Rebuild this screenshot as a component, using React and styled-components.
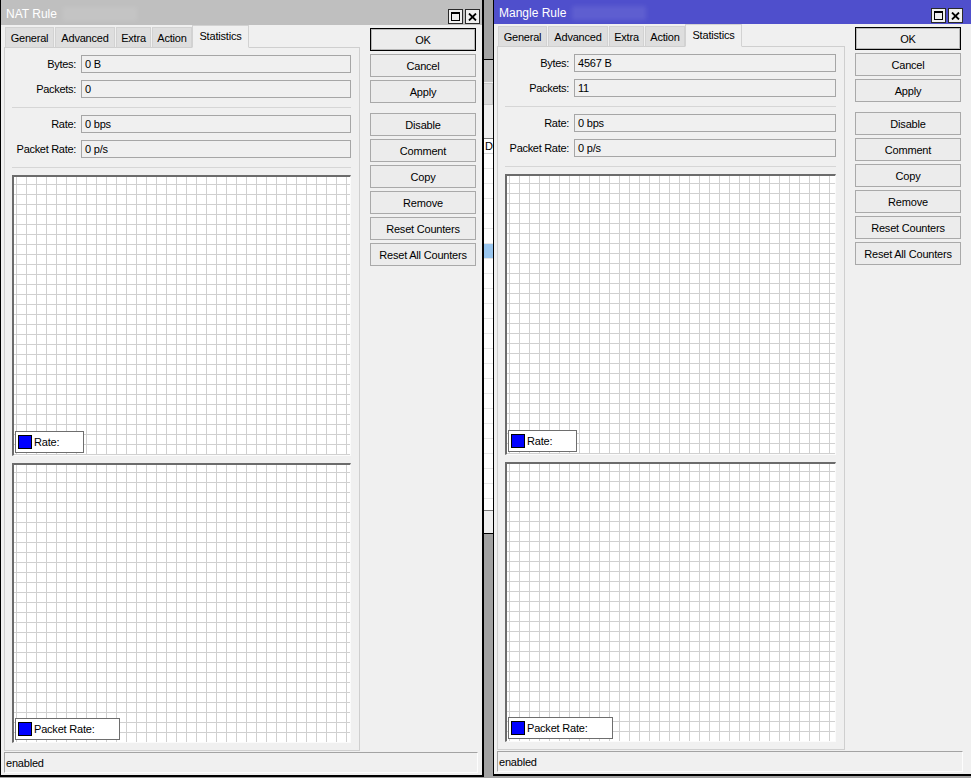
import React from 'react';
import styled, { createGlobalStyle } from 'styled-components';

const GlobalStyle = createGlobalStyle`
  html, body { margin: 0; padding: 0; }
  body {
    width: 971px; height: 778px; overflow: hidden;
    font-family: "Liberation Sans", Arial, sans-serif;
    font-size: 11px; letter-spacing: -0.2px; color: #000;
  }
`;

const Desktop = styled.div`
  position: relative;
  width: 971px;
  height: 778px;
  overflow: hidden;
  background: #a2a2a2;
`;

/* ---------- window behind (only a thin strip shows) ---------- */
const BgWindow = styled.div`
  position: absolute;
  left: 300px;
  top: 59px;
  width: 193px;
  height: 475px;
  box-sizing: border-box;
  border: 1px solid #000;
  border-right: 0;
  background: #f0f0f0;
  display: flex;
  flex-direction: column;
  overflow: hidden;
`;
const BgTitle = styled.div`
  flex: none;
  height: 22px;
  background: #c2c2c2;
`;
const BgToolbar = styled.div`
  flex: none;
  height: 56px;
  box-sizing: border-box;
  padding: 1px 0 1px 3px;
  display: flex;
  flex-direction: column;
  gap: 6px;
`;
const BgToolButton = styled.div`
  height: 22px;
  box-sizing: border-box;
  background: #dadada;
  border: 1px solid #c6c6c6;
`;
const BgList = styled.div`
  flex: 1;
  min-height: 0;
  margin-left: 3px;
  background: #fff;
  border: 1px solid #7a7a7a;
  border-right: 0;
  display: flex;
  flex-direction: column;
  overflow: hidden;
`;
const BgRow = styled.div`
  flex: none;
  height: 15px;
  box-sizing: border-box;
  display: grid;
  grid-template-columns: 178px 1fr;
  border-bottom: 1px solid ${p => (p.$header ? '#d5d5d5' : '#e6e6e6')};
  background: ${p => (p.$selected ? '#99c6ef' : '#fff')};
  line-height: 14px;
  white-space: nowrap;
`;
const BgCell = styled.div`
  padding-left: 2px;
  overflow: hidden;
  min-width: 0;
`;
const BgStatus = styled.div`
  flex: none;
  height: 22px;
`;

/* ---------- dialog windows ---------- */
const Win = styled.div`
  position: absolute;
  left: ${p => p.$left}px;
  top: ${p => p.$top}px;
  width: ${p => p.$width}px;
  height: 778px;
  box-sizing: border-box;
  border-style: solid;
  border-color: #000;
  border-width: 1px 2px 2px 1px;
  background: #f0f0f0;
  display: flex;
  flex-direction: column;
`;

const TitleBar = styled.div`
  flex: none;
  height: 25px;
  box-sizing: border-box;
  display: flex;
  align-items: flex-end;
  padding: 0 ${p => p.$padRight}px 1px 5px;
  background: ${p => (p.$active ? '#4f4fcc' : '#bfbfbf')};
`;
const TitleText = styled.div`
  align-self: center;
  margin-top: 4px;
  color: #fff;
  font-size: 12px;
  letter-spacing: 0;
  white-space: nowrap;
`;
const TitleBlur = styled.div`
  align-self: center;
  margin: 3px 0 0 6px;
  width: 74px;
  height: 14px;
  background: rgba(255, 255, 255, 0.09);
  filter: blur(2px);
`;
const TitleSpacer = styled.div`
  flex: 1;
`;
const TitleButtons = styled.div`
  display: flex;
  gap: 2px;
`;
const TitleButton = styled.div`
  width: 15px;
  height: 15px;
  box-sizing: border-box;
  border: 1px solid #2a2a2a;
  background: #f0f0f0;
  display: flex;
  align-items: center;
  justify-content: center;
`;

const Body = styled.div`
  flex: 1;
  min-height: 0;
  display: flex;
  flex-direction: column;
  padding: 0 ${p => p.$padRight}px 2px 3px;
`;
const Main = styled.div`
  flex: 1;
  min-height: 0;
  display: flex;
  gap: 10px;
`;
const TabArea = styled.div`
  flex: 1;
  min-width: 0;
  display: flex;
  flex-direction: column;
`;
const TabStrip = styled.div`
  flex: none;
  height: 23px;
  display: flex;
  align-items: flex-end;
  padding-left: 1px;
  margin-bottom: -1px;
  position: relative;
  z-index: 1;
`;
const Tab = styled.div`
  width: ${p => p.$w}px;
  height: ${p => (p.$active ? 23 : 21)}px;
  box-sizing: border-box;
  display: flex;
  align-items: center;
  justify-content: center;
  padding-bottom: ${p => (p.$active ? 2 : 0)}px;
  margin: 0 1px 0 ${p => (p.$active ? -1 : 0)}px;
  background: ${p => (p.$active ? '#f0f0f0' : '#dedede')};
  border: 1px solid #d2d2d2;
  border-bottom-color: ${p => (p.$active ? '#f0f0f0' : '#cfcfcf')};
  white-space: nowrap;
`;
const Panel = styled.div`
  flex: 1;
  min-height: 0;
  box-sizing: border-box;
  border: 1px solid #cfcfcf;
  background: #f0f0f0;
  padding: 7px 8px 7px 7px;
  display: flex;
  flex-direction: column;
`;
const Fields = styled.div`
  flex: none;
  display: grid;
  grid-template-columns: 64px 1fr;
  column-gap: 5px;
  row-gap: 7px;
`;
const Label = styled.div`
  text-align: right;
  line-height: 18px;
  white-space: nowrap;
  letter-spacing: -0.3px;
`;
const ValueBox = styled.div`
  height: 18px;
  box-sizing: border-box;
  border: 1px solid #a6a6a6;
  background: #f0f0f0;
  padding: 0 3px;
  line-height: 16px;
  white-space: nowrap;
`;
const Separator = styled.div`
  flex: none;
  height: 1px;
  background: #d6d6d6;
  margin: 9px 0 7px;
`;
const Graphs = styled.div`
  flex: 1;
  min-height: 0;
  display: flex;
  flex-direction: column;
  gap: 7px;
`;
const Graph = styled.div`
  flex: 1;
  min-height: 0;
  position: relative;
  border-style: solid;
  border-width: 2px 1px 1px 2px;
  border-color: #6b6b6b #fbfbfb #fbfbfb #6b6b6b;
  background-color: #fff;
  background-image:
    linear-gradient(to right, #d0d0d0 1px, transparent 1px),
    linear-gradient(to bottom, #d0d0d0 1px, transparent 1px);
  background-size: 10px 10px;
  background-position: 2px 7px;
`;
const Legend = styled.div`
  position: absolute;
  left: 1px;
  bottom: 2px;
  height: 22px;
  box-sizing: border-box;
  display: flex;
  align-items: center;
  gap: 2px;
  padding: 0 24px 0 2px;
  background: #fff;
  border: 1px solid #6e6e6e;
  white-space: nowrap;
`;
const Swatch = styled.span`
  width: 14px;
  height: 14px;
  box-sizing: border-box;
  background: #0000ff;
  border: 1px solid #000;
`;

const ButtonColumn = styled.div`
  flex: none;
  width: 106px;
  display: flex;
  flex-direction: column;
  gap: 3px;
  padding-top: 3px;
`;
const Button = styled.button`
  height: 23px;
  box-sizing: border-box;
  margin: ${p => (p.$groupStart ? '7px 0 0' : '0')};
  padding: 0;
  font: inherit;
  letter-spacing: inherit;
  color: #000;
  background: #ececec;
  border: 1px solid ${p => (p.$default ? '#000' : '#a9a9a9')};
  box-shadow: ${p => (p.$default ? 'inset 0 0 0 1px rgba(0,0,0,0.22)' : 'none')};
  display: flex;
  align-items: center;
  justify-content: center;
`;

const StatusBar = styled.div`
  flex: none;
  height: 21px;
  box-sizing: border-box;
  margin: 1px -2px 0 0;
  border: 1px solid;
  border-color: #a3a3a3 #fdfdfd #fdfdfd #a3a3a3;
  padding: 0 1px;
  display: flex;
  align-items: center;
`;

const MaxIcon = () => (
  <svg width="9" height="9" viewBox="0 0 9 9">
    <rect x="0.5" y="0.5" width="8" height="8" fill="none" stroke="#000" />
    <line x1="0" y1="1.5" x2="9" y2="1.5" stroke="#000" />
  </svg>
);
const CloseIcon = () => (
  <svg width="9" height="8" viewBox="0 0 9 8">
    <path d="M1 0.5 L8 7.5 M8 0.5 L1 7.5" stroke="#000" strokeWidth="1.8" />
  </svg>
);

const TABS = [
  { label: 'General', w: 49 },
  { label: 'Advanced', w: 60 },
  { label: 'Extra', w: 35 },
  { label: 'Action', w: 40 },
  { label: 'Statistics', w: 57, active: true },
];
const BUTTONS = [
  { label: 'OK', def: true },
  { label: 'Cancel' },
  { label: 'Apply' },
  { label: 'Disable', group: true },
  { label: 'Comment' },
  { label: 'Copy' },
  { label: 'Remove' },
  { label: 'Reset Counters' },
  { label: 'Reset All Counters' },
];

function RuleWindow({ title, active, left, top, width, padRight, titlePadRight, bytes, packets }) {
  return (
    <Win $left={left} $top={top} $width={width}>
      <TitleBar $active={active} $padRight={titlePadRight}>
        <TitleText>{title}</TitleText>
        <TitleBlur />
        <TitleSpacer />
        <TitleButtons>
          <TitleButton><MaxIcon /></TitleButton>
          <TitleButton><CloseIcon /></TitleButton>
        </TitleButtons>
      </TitleBar>
      <Body $padRight={padRight}>
        <Main>
          <TabArea>
            <TabStrip>
              {TABS.map(t => (
                <Tab key={t.label} $w={t.w} $active={t.active}>{t.label}</Tab>
              ))}
            </TabStrip>
            <Panel>
              <Fields>
                <Label>Bytes:</Label>
                <ValueBox>{bytes}</ValueBox>
                <Label>Packets:</Label>
                <ValueBox>{packets}</ValueBox>
              </Fields>
              <Separator />
              <Fields>
                <Label>Rate:</Label>
                <ValueBox>0 bps</ValueBox>
                <Label>Packet Rate:</Label>
                <ValueBox>0 p/s</ValueBox>
              </Fields>
              <Separator />
              <Graphs>
                <Graph>
                  <Legend><Swatch />Rate:</Legend>
                </Graph>
                <Graph>
                  <Legend><Swatch />Packet Rate:</Legend>
                </Graph>
              </Graphs>
            </Panel>
          </TabArea>
          <ButtonColumn>
            {BUTTONS.map(b => (
              <Button key={b.label} $default={b.def} $groupStart={b.group}>{b.label}</Button>
            ))}
          </ButtonColumn>
        </Main>
        <StatusBar>enabled</StatusBar>
      </Body>
    </Win>
  );
}

export default function App() {
  const rows = Array.from({ length: 24 }, (_, i) => i);
  return (
    <>
      <GlobalStyle />
      <Desktop>
        <BgWindow>
          <BgTitle />
          <BgToolbar>
            <BgToolButton />
          </BgToolbar>
          <BgList>
            <BgRow $header>
              <BgCell>Chain</BgCell>
              <BgCell>Ds</BgCell>
            </BgRow>
            {rows.map(i => (
              <BgRow key={i} $selected={i === 6}>
                <BgCell />
                <BgCell />
              </BgRow>
            ))}
          </BgList>
          <BgStatus />
        </BgWindow>
        <RuleWindow
          title="NAT Rule"
          left={0}
          top={-1}
          width={484}
          padRight={6}
          titlePadRight={2}
          bytes="0 B"
          packets="0"
        />
        <RuleWindow
          title="Mangle Rule"
          active
          left={493}
          top={-2}
          width={480}
          padRight={10}
          titlePadRight={8}
          bytes="4567 B"
          packets="11"
        />
      </Desktop>
    </>
  );
}
